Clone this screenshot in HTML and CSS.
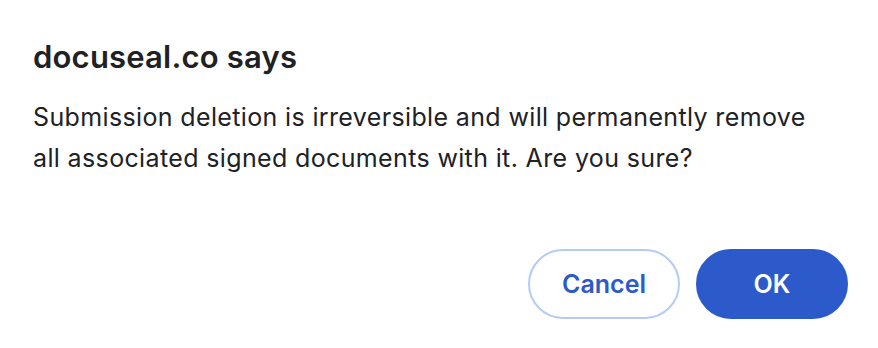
FILE: index.html
```html
<!DOCTYPE html>
<html>
<head>
<meta charset="utf-8">
<link rel="stylesheet" href="styles.css">
</head>
<body>
<div class="dialog">
  <h1 class="title">docuseal.co says</h1>
  <p class="message">Submission deletion is irreversible and will permanently remove all associated signed documents with it. Are you sure?</p>
  <div class="actions">
    <button class="btn btn-cancel">Cancel</button>
    <button class="btn btn-ok">OK</button>
  </div>
</div>
</body>
</html>
```
FILE: styles.css
```css
html, body {
  margin: 0;
  padding: 0;
  background: #ffffff;
}
body {
  font-family: Inter, "Noto Sans", sans-serif;
  color: #202124;
}
.dialog {
  width: 878px;
  height: 348px;
  box-sizing: border-box;
  padding: 37px 30px 29px 33px;
  display: flex;
  flex-direction: column;
}
.title {
  margin: 0;
  font-size: 31px;
  font-weight: 600;
  line-height: 40px;
  letter-spacing: 0.2px;
}
.message {
  margin: 20px 0 0 0;
  width: 800px;
  font-size: 25px;
  font-weight: 400;
  line-height: 41px;
  letter-spacing: 0.36px;
}
.actions {
  margin-top: auto;
  display: flex;
  justify-content: flex-end;
  gap: 16px;
}
.btn {
  width: 152px;
  height: 70px;
  border-radius: 35px;
  font-family: Inter, "Noto Sans", sans-serif;
  font-size: 25px;
  font-weight: 600;
  box-sizing: border-box;
  cursor: pointer;
}
.btn-cancel {
  background: #ffffff;
  border: 2px solid #b3cbf5;
  color: #2c5acb;
}
.btn-ok {
  background: #2c5acb;
  border: 2px solid #2c5acb;
  color: #ffffff;
}
```
